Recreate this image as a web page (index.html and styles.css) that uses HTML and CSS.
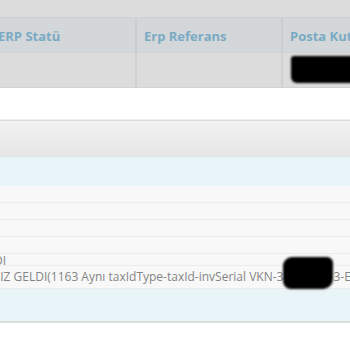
FILE: index.html
```html
<!DOCTYPE html>
<html lang="tr">
<head>
    <meta charset="UTF-8">
    <title>Faturalar</title>
    <link rel="stylesheet" href="styles.css">
</head>
<body>
    <div class="top-strip"></div>
    <div class="grid head">
        <div class="cell first">ERP Statü</div>
        <div class="cell">Erp Referans</div>
        <div class="cell">Posta Kutusu</div>
    </div>
    <div class="grid data">
        <div class="cell first"></div>
        <div class="cell"></div>
        <div class="cell"><span class="scribble wide"></span></div>
    </div>
    <div class="gap"></div>
    <div class="toolbar"></div>
    <div class="row selected"></div>
    <div class="row"></div>
    <div class="row"></div>
    <div class="row"></div>
    <div class="row"></div>
    <div class="row msg short"><span class="cut">HATALI GELDI</span></div>
    <div class="row msg long"><span class="cut">HATASIZ GELDI(1163 Aynı taxIdType-taxId-invSerial VKN-3<span class="scribble small"></span>3-ERP)</span></div>
    <div class="row selected tall"></div>
    <div class="bottom"></div>
</body>
</html>
```

FILE: styles.css
```css
body {
    margin: 0;
    font-family: "Open Sans", Arial, sans-serif;
    background-color: white;
    overflow: hidden;
}

.top-strip {
    height: 17px;
    background-color: #dcdcdc;
    border-bottom: 1px solid #d0d0d0;
}

.grid {
    display: grid;
    grid-template-columns: 135px 146px 1fr;
    white-space: nowrap;
    overflow: hidden;
}

.cell {
    border-left: 2px solid #c9cdcf;
    overflow: hidden;
}

.cell.first {
    border-left: none;
}

.head {
    height: 34px;
    background-color: #d3d7d9;
    border-bottom: 1px solid #cfd3d5;
}

.head .cell {
    font-size: 13px;
    font-weight: 700;
    color: #7aaac4;
    line-height: 36px;
    padding-left: 7px;
}

.head .cell.first {
    padding-left: 0;
    text-indent: -2px;
}

.data {
    height: 34px;
    background-color: #dcdcdc;
    border-bottom: 1px solid #d2d2d2;
}

.data .cell {
    border-left-color: #d0d0d0;
    padding-left: 8px;
}

.scribble {
    display: inline-block;
    background-color: #000;
    border-radius: 4px;
    filter: blur(1px);
    vertical-align: middle;
}

.scribble.wide {
    width: 70px;
    height: 27px;
    margin-top: 3px;
    border-radius: 3px 2px 5px 6px;
}

.scribble.small {
    width: 50px;
    height: 32px;
    border-radius: 9px 6px 10px 8px;
    margin-top: -10px;
}

.gap {
    height: 28px;
    border-top: 2px solid white;
    border-bottom: 1px solid #f0f0f0;
    margin-top: 1px;
}

.toolbar {
    height: 35px;
    border-top: 1px solid #dadada;
    background: linear-gradient(#f3f3f3, #e5e5e5);
    border-bottom: 1px solid #dde3e6;
}

.row {
    height: 16px;
    background-color: #f8f8f8;
    border-bottom: 1px solid #ececec;
    white-space: nowrap;
    overflow: hidden;
}

.row.selected {
    height: 29px;
    background-color: #e9f4f9;
    border-bottom: none;
}

.row.tall {
    height: 32px;
    border-bottom: 2px solid #dcdcdc;
}

.msg {
    font-size: 12px;
    color: #858585;
}

.msg.short {
    height: 11px;
    line-height: 13px;
}

.cut {
    display: inline-block;
    margin-left: -37px;
}

.msg.short .cut {
    margin-left: -71px;
}

.msg.long {
    height: 22px;
    line-height: 22px;
    overflow: visible;
    position: relative;
}

.bottom {
    height: 40px;
}
```
